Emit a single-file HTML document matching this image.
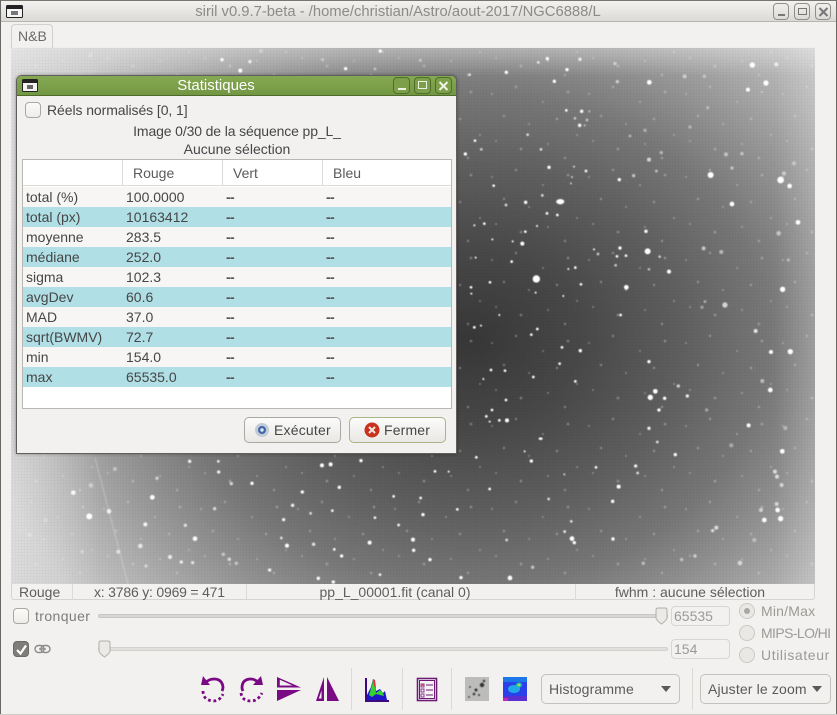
<!DOCTYPE html>
<html><head><meta charset="utf-8"><style>
html,body{margin:0;padding:0;background:#f2f1f0}
#r{position:relative;width:837px;height:715px;overflow:hidden;background:#f2f1f0;font-family:"Liberation Sans",sans-serif;font-size:14px;color:#464646}
.t{position:absolute;white-space:nowrap;line-height:18px}
.d{letter-spacing:-.6px;font-weight:bold;color:#555}
.a{position:absolute;box-sizing:border-box}
.wb{position:absolute;top:3px;width:16px;height:17px;box-sizing:border-box;border:1px solid #8f8f8a;border-radius:4px;background:linear-gradient(#f0efed,#dddbd7)}
.db{position:absolute;top:77px;width:17px;height:17px;box-sizing:border-box;border:1px solid #4f6e2a;border-radius:4px;background:#7d9f4a}
.row{position:absolute;left:23px;width:428px;height:20px}
.teal{background:#b0dfe5}
.chk{position:absolute;width:16px;height:16px;box-sizing:border-box;border:1px solid #a9a8a3;border-radius:4px;background:linear-gradient(#fbfbfa,#eeedeb)}
.entry{position:absolute;height:20px;box-sizing:border-box;border:1px solid #d8d6d2;border-radius:4px;background:#f2f1f0;color:#9a9a96;padding-left:2px;line-height:18px}
.rad{position:absolute;width:16px;height:16px;box-sizing:border-box;border:1px solid #c9c8c4;border-radius:50%;background:#e9e8e5}
.btn{position:absolute;box-sizing:border-box;border:1px solid #b4b2ac;border-radius:5px;background:linear-gradient(#fbfbfa,#e9e8e5)}
.sep{position:absolute;width:1px;background:#dcdad6}
</style></head><body><div id="r">

<!-- window frame -->
<div class="a" style="left:0;top:0;width:837px;height:22px;background:linear-gradient(#f3f2f0,#dcdad6);border-bottom:1px solid #b8b6b0;border-top:1px solid #77756f"></div>
<div class="a" style="left:0;top:0;width:1px;height:715px;background:#6a6864"></div>
<div class="a" style="right:0;top:0;width:1px;height:715px;background:#6a6864"></div>
<svg class="a" style="left:6px;top:5px" width="17" height="13" viewBox="0 0 17 13"><rect x=".5" y=".5" width="16" height="12" rx="1" fill="#f6f6f6" stroke="#222"/><rect x="1" y="1" width="15" height="3" fill="#222"/><rect x="5" y="6" width="7" height="4" fill="#777"/></svg>
<div class="t" style="left:398px;top:3px;color:#8b8b87;transform:translateX(-50%);font-size:14.8px">siril v0.9.7-beta - /home/christian/Astro/aout-2017/NGC6888/L</div>
<div class="wb" style="left:773px"><div class="a" style="left:4px;top:10px;width:7px;height:2px;background:#777"></div></div>
<div class="wb" style="left:794px"><div class="a" style="left:3px;top:4px;width:9px;height:7px;border:1px solid #777"></div></div>
<div class="wb" style="left:815px"><svg class="a" style="left:2px;top:3px" width="11" height="10"><path d="M1.5 1l8 8M9.500 1l-8 8" stroke="#777" stroke-width="2"/></svg></div>

<!-- tab -->
<div class="a" style="left:11px;top:24px;width:42px;height:25px;border:1px solid #d2d0cb;border-bottom:0;border-radius:4px 4px 0 0;background:#f2f1f0"></div>
<div class="t" style="left:18px;top:27px;color:#6a6a68;font-size:14px">N&amp;B</div>

<!-- image -->
<div class="a" style="left:11px;top:48px;width:804px;height:536px;background:linear-gradient(to bottom,rgba(255,255,255,.34),rgba(255,255,255,0) 28px),linear-gradient(to right,rgba(255,255,255,.4),rgba(255,255,255,0) 90px),linear-gradient(to left,rgba(255,255,255,.18),rgba(255,255,255,0) 40px),radial-gradient(500px 412px at 459px 292px,#393939 0,#4b4b4b 22%,#626262 42%,#7c7c7c 60%,#9a9a9a 74%,#b9b9b9 88%,#d0d0d0 100%)"></div>
<svg class="a" style="left:0;top:0;filter:blur(.65px)" width="837" height="715" viewBox="0 0 837 715">
<defs><pattern id="g" width="3" height="3" patternUnits="userSpaceOnUse"><path d="M0 .5H3M.5 0V3" stroke="#000" stroke-opacity=".07" fill="none"/></pattern>
<pattern id="f" width="97" height="83" patternUnits="userSpaceOnUse"><g fill="#fff" fill-opacity=".32"><circle cx="7" cy="11" r="1"/><circle cx="31" cy="4" r="1.200"/><circle cx="58" cy="19" r="1"/><circle cx="83" cy="9" r="1.300"/><circle cx="19" cy="33" r="1.200"/><circle cx="44" cy="41" r="1"/><circle cx="72" cy="36" r="1.200"/><circle cx="92" cy="52" r="1"/><circle cx="11" cy="58" r="1"/><circle cx="36" cy="66" r="1.300"/><circle cx="63" cy="61" r="1"/><circle cx="80" cy="75" r="1.200"/></g></pattern>
<clipPath id="ic"><rect x="11" y="48" width="804" height="536"/></clipPath></defs>
<g clip-path="url(#ic)">
<rect x="11" y="48" width="804" height="536" fill="url(#f)"/>
<rect x="11" y="48" width="804" height="536" fill="url(#g)"/>
<path d="M95 458L128 584" stroke="#fff" stroke-opacity=".2" stroke-width="1.500"/>
<g fill="#fff">
<g transform="translate(11,45) scale(.3333)">
<circle cx="1108" cy="18" r="5"/><circle cx="633" cy="44" r="5"/><circle cx="717" cy="50" r="5" fill-opacity=".8"/><circle cx="688" cy="77" r="6"/><circle cx="1004" cy="71" r="5"/><circle cx="238" cy="32" r="6" fill-opacity=".25"/><circle cx="750" cy="18" r="6" fill-opacity=".3"/><circle cx="935" cy="44" r="5" fill-opacity=".35"/><circle cx="1092" cy="72" r="4" fill-opacity=".5"/><circle cx="1228" cy="46" r="4" fill-opacity=".5"/>
</g>
<g transform="translate(460,50) scale(.3333)">
<circle cx="568" cy="97" r="7"/><circle cx="877" cy="45" r="8"/><circle cx="918" cy="99" r="8"/><circle cx="864" cy="119" r="6"/><circle cx="949" cy="43" r="6" fill-opacity=".7"/><circle cx="262" cy="26" r="5"/><circle cx="235" cy="37" r="4" fill-opacity=".8"/><circle cx="321" cy="59" r="5"/><circle cx="360" cy="28" r="5" fill-opacity=".8"/><circle cx="139" cy="67" r="5"/><circle cx="283" cy="94" r="5"/><circle cx="29" cy="74" r="4" fill-opacity=".8"/><circle cx="472" cy="95" r="5" fill-opacity=".6"/><circle cx="465" cy="41" r="5" fill-opacity=".5"/><circle cx="674" cy="79" r="6" fill-opacity=".5"/><circle cx="733" cy="79" r="5" fill-opacity=".4"/><circle cx="365" cy="184" r="5"/><circle cx="319" cy="181" r="4"/><circle cx="359" cy="226" r="5"/><circle cx="345" cy="205" r="4" fill-opacity=".6"/><circle cx="381" cy="210" r="4" fill-opacity=".6"/><circle cx="388" cy="184" r="3" fill-opacity=".6"/><circle cx="374" cy="226" r="3" fill-opacity=".6"/><circle cx="45" cy="272" r="4"/><circle cx="16" cy="312" r="5"/><circle cx="64" cy="298" r="4" fill-opacity=".7"/><circle cx="203" cy="254" r="4" fill-opacity=".8"/><circle cx="243" cy="298" r="4" fill-opacity=".8"/><circle cx="267" cy="352" r="5"/><circle cx="378" cy="363" r="4"/><circle cx="342" cy="350" r="3" fill-opacity=".8"/><circle cx="336" cy="381" r="3" fill-opacity=".7"/><circle cx="333" cy="400" r="3" fill-opacity=".7"/><circle cx="478" cy="389" r="5"/><circle cx="567" cy="329" r="6" fill-opacity=".7"/><circle cx="604" cy="308" r="5" fill-opacity=".5"/><circle cx="589" cy="363" r="4" fill-opacity=".6"/><circle cx="521" cy="377" r="5" fill-opacity=".6"/><circle cx="752" cy="375" r="9"/><circle cx="962" cy="390" r="10"/><circle cx="989" cy="408" r="7"/><circle cx="816" cy="462" r="7"/><circle cx="1014" cy="517" r="7"/><circle cx="798" cy="313" r="6" fill-opacity=".5"/><circle cx="846" cy="311" r="5" fill-opacity=".5"/><circle cx="816" cy="354" r="5" fill-opacity=".5"/><circle cx="972" cy="370" r="6" fill-opacity=".5"/><circle cx="1002" cy="340" r="6" fill-opacity=".4"/><circle cx="956" cy="550" r="7" fill-opacity=".5"/><circle cx="690" cy="231" r="5" fill-opacity=".4"/><circle cx="555" cy="241" r="5" fill-opacity=".4"/><circle cx="510" cy="258" r="4" fill-opacity=".5"/><circle cx="743" cy="173" r="5" fill-opacity=".35"/>
<ellipse cx="301" cy="455" rx="12" ry="8"/><circle cx="197" cy="457" r="5"/><circle cx="247" cy="436" r="4" fill-opacity=".8"/><circle cx="261" cy="490" r="4"/><circle cx="292" cy="495" r="4"/><circle cx="138" cy="465" r="4" fill-opacity=".8"/><circle cx="73" cy="521" r="4"/><circle cx="43" cy="526" r="3"/><circle cx="101" cy="407" r="4"/><circle cx="187" cy="581" r="6"/><circle cx="196" cy="545" r="4"/><circle cx="231" cy="528" r="3"/><circle cx="97" cy="568" r="3"/><circle cx="158" cy="574" r="3"/><circle cx="558" cy="544" r="5"/><circle cx="563" cy="604" r="9"/><circle cx="480" cy="594" r="5"/><circle cx="471" cy="619" r="4"/><circle cx="498" cy="617" r="4"/><circle cx="402" cy="598" r="3"/><circle cx="414" cy="612" r="4" fill-opacity=".7"/><circle cx="627" cy="665" r="6"/><circle cx="599" cy="620" r="4" fill-opacity=".7"/><circle cx="567" cy="658" r="4" fill-opacity=".6"/><circle cx="731" cy="595" r="6" fill-opacity=".6"/><circle cx="784" cy="606" r="6" fill-opacity=".5"/><circle cx="229" cy="687" r="11"/><circle cx="155" cy="635" r="4"/><circle cx="346" cy="653" r="4"/><circle cx="325" cy="657" r="3"/><circle cx="363" cy="703" r="4"/><circle cx="499" cy="712" r="7"/><circle cx="467" cy="646" r="4" fill-opacity=".7"/><circle cx="90" cy="697" r="4"/><circle cx="33" cy="712" r="4"/><circle cx="34" cy="731" r="3"/><circle cx="47" cy="623" r="3"/><circle cx="968" cy="718" r="8"/><circle cx="795" cy="765" r="8" fill-opacity=".7"/><circle cx="735" cy="755" r="4" fill-opacity=".5"/><circle cx="726" cy="772" r="5" fill-opacity=".4"/><circle cx="985" cy="630" r="5" fill-opacity=".4"/><circle cx="482" cy="795" r="4"/><circle cx="118" cy="795" r="3"/><circle cx="227" cy="728" r="3"/><circle cx="310" cy="738" r="3"/>
</g>
<g transform="translate(11,440) scale(.3333)">
<circle cx="187" cy="158" r="7" fill-opacity=".9"/><circle cx="235" cy="229" r="9"/><circle cx="294" cy="214" r="7" fill-opacity=".8"/><circle cx="240" cy="136" r="7" fill-opacity=".4"/><circle cx="312" cy="87" r="6" fill-opacity=".4"/><circle cx="424" cy="172" r="7"/><circle cx="403" cy="253" r="6" fill-opacity=".9"/><circle cx="388" cy="318" r="7" fill-opacity=".7"/><circle cx="536" cy="64" r="5" fill-opacity=".9"/><circle cx="622" cy="64" r="4" fill-opacity=".9"/><circle cx="623" cy="96" r="5" fill-opacity=".9"/><circle cx="438" cy="115" r="5" fill-opacity=".6"/><circle cx="611" cy="206" r="5" fill-opacity=".7"/><circle cx="523" cy="256" r="5" fill-opacity=".7"/><circle cx="552" cy="296" r="7"/><circle cx="477" cy="351" r="6" fill-opacity=".8"/><circle cx="511" cy="366" r="5" fill-opacity=".8"/><circle cx="545" cy="368" r="5" fill-opacity=".7"/><circle cx="322" cy="335" r="6" fill-opacity=".6"/><circle cx="405" cy="378" r="5" fill-opacity=".5"/><circle cx="933" cy="76" r="6"/><circle cx="959" cy="73" r="6"/><circle cx="1050" cy="62" r="5"/><circle cx="985" cy="142" r="5"/><circle cx="874" cy="156" r="5"/><circle cx="723" cy="130" r="5"/><circle cx="661" cy="131" r="5" fill-opacity=".7"/><circle cx="845" cy="196" r="5" fill-opacity=".9"/><circle cx="818" cy="239" r="5" fill-opacity=".9"/><circle cx="964" cy="212" r="4"/><circle cx="899" cy="220" r="4" fill-opacity=".8"/><circle cx="1092" cy="233" r="4"/><circle cx="1163" cy="255" r="4"/><circle cx="1148" cy="169" r="4"/><circle cx="828" cy="317" r="6"/><circle cx="1076" cy="308" r="6"/><circle cx="908" cy="313" r="5" fill-opacity=".8"/><circle cx="992" cy="348" r="5"/><circle cx="970" cy="328" r="4"/><circle cx="811" cy="294" r="4" fill-opacity=".8"/><circle cx="776" cy="390" r="5" fill-opacity=".9"/><circle cx="922" cy="415" r="5"/><circle cx="967" cy="426" r="5"/><circle cx="1107" cy="404" r="4"/><circle cx="655" cy="358" r="5" fill-opacity=".7"/><circle cx="637" cy="343" r="5" fill-opacity=".5"/><circle cx="676" cy="370" r="5" fill-opacity=".5"/><circle cx="214" cy="335" r="5" fill-opacity=".4"/><circle cx="104" cy="240" r="6" fill-opacity=".25"/><circle cx="56" cy="285" r="6" fill-opacity=".25"/>
</g>
<g transform="translate(410,320) scale(.3333)">
<circle cx="193" cy="22" r="4"/><circle cx="213" cy="17" r="3"/><circle cx="364" cy="44" r="4"/><circle cx="382" cy="27" r="4"/><circle cx="511" cy="92" r="5"/><circle cx="456" cy="82" r="4"/><circle cx="449" cy="131" r="4"/><circle cx="285" cy="152" r="4"/><circle cx="243" cy="150" r="4"/><circle cx="220" cy="177" r="3"/><circle cx="370" cy="171" r="4"/><circle cx="496" cy="184" r="4"/><circle cx="288" cy="240" r="4"/><circle cx="291" cy="301" r="6"/><circle cx="268" cy="301" r="4"/><circle cx="246" cy="270" r="4"/><circle cx="229" cy="289" r="4"/><circle cx="239" cy="305" r="3"/><ellipse cx="392" cy="356" rx="6" ry="4"/><circle cx="364" cy="423" r="5"/><circle cx="344" cy="394" r="3"/><circle cx="199" cy="412" r="4"/><circle cx="75" cy="454" r="4"/><circle cx="116" cy="455" r="3"/><circle cx="239" cy="507" r="4"/><circle cx="32" cy="534" r="4"/><circle cx="142" cy="568" r="4"/><circle cx="39" cy="584" r="5"/><circle cx="9" cy="659" r="6"/><circle cx="11" cy="691" r="5"/><circle cx="60" cy="719" r="5"/><circle cx="153" cy="773" r="5"/><circle cx="300" cy="774" r="7"/><circle cx="290" cy="660" r="4" fill-opacity=".8"/><circle cx="486" cy="656" r="7"/><circle cx="493" cy="668" r="5"/><circle cx="464" cy="635" r="4" fill-opacity=".9"/><circle cx="609" cy="657" r="5"/><circle cx="484" cy="604" r="4" fill-opacity=".8"/><circle cx="416" cy="537" r="4" fill-opacity=".8"/><circle cx="608" cy="544" r="5"/><circle cx="626" cy="500" r="6"/><circle cx="558" cy="442" r="4"/><circle cx="677" cy="438" r="5" fill-opacity=".9"/><circle cx="683" cy="459" r="4" fill-opacity=".8"/><circle cx="463" cy="463" r="3" fill-opacity=".8"/><circle cx="721" cy="232" r="8"/><circle cx="736" cy="214" r="7"/><circle cx="764" cy="235" r="5"/><circle cx="747" cy="270" r="5"/><circle cx="717" cy="125" r="5"/><circle cx="717" cy="325" r="5" fill-opacity=".9"/><circle cx="742" cy="366" r="4" fill-opacity=".8"/><circle cx="796" cy="404" r="5"/><circle cx="832" cy="228" r="5" fill-opacity=".9"/><circle cx="805" cy="198" r="5" fill-opacity=".7"/><circle cx="1081" cy="210" r="7"/><circle cx="1141" cy="95" r="8"/><circle cx="1083" cy="96" r="6"/><circle cx="1037" cy="33" r="6" fill-opacity=".8"/><circle cx="1016" cy="316" r="6"/><circle cx="1117" cy="394" r="7"/><circle cx="1095" cy="455" r="6" fill-opacity=".7"/><circle cx="1101" cy="470" r="6" fill-opacity=".7"/><circle cx="1115" cy="495" r="6" fill-opacity=".6"/><circle cx="1103" cy="570" r="7"/><circle cx="1112" cy="596" r="8"/><circle cx="1063" cy="600" r="7"/><circle cx="1100" cy="552" r="6" fill-opacity=".6"/><circle cx="1053" cy="570" r="6" fill-opacity=".6"/><circle cx="919" cy="623" r="6" fill-opacity=".7"/><circle cx="908" cy="632" r="5" fill-opacity=".7"/><circle cx="990" cy="729" r="7" fill-opacity=".6"/><circle cx="855" cy="708" r="5" fill-opacity=".6"/><circle cx="815" cy="719" r="5" fill-opacity=".5"/><circle cx="700" cy="730" r="5" fill-opacity=".5"/><circle cx="368" cy="742" r="5" fill-opacity=".6"/><circle cx="1057" cy="183" r="6" fill-opacity=".5"/><circle cx="1126" cy="324" r="6" fill-opacity=".4"/><circle cx="964" cy="376" r="6" fill-opacity=".4"/><circle cx="1033" cy="660" r="6" fill-opacity=".4"/><circle cx="890" cy="270" r="5" fill-opacity=".4"/>
</g>
</g></g></svg>

<!-- status bar -->
<div class="a" style="left:11px;top:584px;width:804px;height:16px;background:#f2f1f0;border:1px solid #d6d4d0;border-top:0;border-radius:0 0 3px 3px"></div>
<div class="sep" style="left:72px;top:584px;height:16px"></div>
<div class="sep" style="left:246px;top:584px;height:16px"></div>
<div class="sep" style="left:575px;top:584px;height:16px"></div>
<div class="t" style="left:19px;top:583px;color:#5e5e5c">Rouge</div>
<div class="t" style="left:94px;top:583px;color:#5e5e5c;letter-spacing:-.2px">x: 3786 y: 0969 = 471</div>
<div class="t" style="left:395px;top:583px;color:#5e5e5c;transform:translateX(-50%)">pp_L_00001.fit (canal 0)</div>
<div class="t" style="left:690px;top:583px;color:#5e5e5c;transform:translateX(-50%)">fwhm : aucune sélection</div>

<!-- sliders row -->
<div class="chk" style="left:13px;top:608px"></div>
<div class="t" style="left:35px;top:607px;color:#7c7c7a;letter-spacing:.4px">tronquer</div>
<div class="a" style="left:98px;top:614px;width:570px;height:4px;background:#d8d6d2;border:1px solid #c9c7c3;border-radius:2px"></div>
<svg class="a" style="left:655px;top:607px" width="13" height="18"><path d="M1 3q0-2 2-2h7q2 0 2 2v8q0 2-5.500 6q-5.500-4-5.500-6z" fill="#eceae7" stroke="#b0aeaa"/></svg>
<div class="entry" style="left:671px;top:606px;width:59px">65535</div>
<div class="rad" style="left:739px;top:603px"><div class="a" style="left:4px;top:4px;width:6px;height:6px;border-radius:50%;background:#a9a8a4"></div></div>
<div class="t" style="left:761px;top:602px;color:#9a9a96;letter-spacing:.2px">Min/Max</div>
<div class="rad" style="left:739px;top:625px"></div>
<div class="t" style="left:761px;top:624px;color:#9a9a96;letter-spacing:-.6px">MIPS-LO/HI</div>
<div class="rad" style="left:739px;top:647px"></div>
<div class="t" style="left:761px;top:646px;color:#9a9a96;letter-spacing:.6px">Utilisateur</div>

<div class="chk" style="left:13px;top:641px;background:#7f7e7a;border-color:#6b6a66"><svg class="a" style="left:1px;top:1px" width="13" height="13"><path d="M2 7l3.500 3.500L11 2.500" fill="none" stroke="#fff" stroke-width="2.200"/></svg></div>
<svg class="a" style="left:34px;top:644px" width="17" height="10"><rect x="1" y="1.500" width="9" height="7" rx="3.500" fill="none" stroke="#8a8a86" stroke-width="1.400"/><rect x="7" y="1.500" width="9" height="7" rx="3.500" fill="none" stroke="#8a8a86" stroke-width="1.400"/><path d="M5 5h7" stroke="#8a8a86" stroke-width="1.400"/></svg>
<div class="a" style="left:98px;top:647px;width:570px;height:4px;background:#e2e0dc;border:1px solid #d3d1cd;border-radius:2px"></div>
<svg class="a" style="left:98px;top:640px" width="13" height="18"><path d="M1 3q0-2 2-2h7q2 0 2 2v8q0 2-5.500 6q-5.500-4-5.500-6z" fill="#eceae7" stroke="#b0aeaa"/></svg>
<div class="entry" style="left:671px;top:639px;width:59px">154</div>

<!-- toolbar -->
<svg class="a" style="left:0;top:665px" width="540" height="50" viewBox="0 0 540 50">
<g fill="#7a0a84" stroke="none">
<path d="M205 18q4-4 9-4 8 0 9 8 0 2-1 4" fill="none" stroke="#7a0a84" stroke-width="2.800"/><path d="M201 20l2-9 7 9z"/>
<g fill="none" stroke="#7a0a84" stroke-width="2.800" stroke-dasharray="2.800 2.600"><path d="M203 26q0 9 10 10 7 0 10-7"/></g>
<path d="M259 18q-4-4-8-4-9 0-9 9 0 1 1 3" fill="none" stroke="#7a0a84" stroke-width="2.800"/><path d="M263 20l-2-9-8 9z"/>
<g fill="none" stroke="#7a0a84" stroke-width="2.800" stroke-dasharray="2.800 2.600"><path d="M241 28q1 8 10 8 7 0 11-8"/></g>
<path d="M277 12l24 10.500h-24zM279.800 14.800v5.700h12.900z" fill-rule="evenodd"/><path d="M277 25h24l-24 11z"/>
<path d="M316 36l8-24v24zM318.800 33.500h2.700v-8z" fill-rule="evenodd"/><path d="M327 12l12 24h-12z"/>
<rect x="365" y="35" width="24" height="2" fill="#3c0a80"/><rect x="365" y="13" width="2" height="24" fill="#3c0a80"/>
<path d="M367 35v-5l4-8 2-8 2 2 1 10 4-2 3 4 2-2 2 9z" fill="#1d17c8"/><path d="M369 30l3-10 1-6 2 6 1 8 4-3 3 3 1 3-8-2-4 3z" fill="#35d32f"/><path d="M373 14l2 1 1 8-2-2z" fill="#e0303a"/>
<rect x="417.500" y="13.500" width="19" height="22" fill="#fff" stroke="#6c1a74" stroke-width="1.600"/><rect x="419.500" y="15.500" width="15" height="18" fill="#f4f2f4" stroke="#6c1a74"/>
<path d="M421 19h3v3h-3zM421 24h3v3h-3zM421 29h3v3h-3z" fill="none" stroke="#8a3a90"/><path d="M421 19h3v2h-3z" fill="#e04a50"/><path d="M426 20h7M426 25h7M426 30h7" stroke="#6c1a74" stroke-width="1.100"/>
</g>
<rect x="465" y="12" width="24" height="24" fill="#bcbcba"/>
<g fill="#333" style="filter:blur(.5px)"><circle cx="482" cy="20" r="2.200"/><circle cx="476" cy="25" r="1.500"/><circle cx="474" cy="29" r="1.300"/><circle cx="484" cy="16" r="1.200"/><circle cx="470" cy="22" r=".9"/><circle cx="479" cy="30" r="1"/><circle cx="469" cy="32" r=".9"/></g>
<rect x="503" y="12" width="24" height="24" fill="#2a40e8"/><rect x="503" y="31" width="24" height="5" fill="#5a30d0"/><rect x="503" y="12" width="24" height="5" fill="#1c78e8"/>
<ellipse cx="514" cy="24" rx="6" ry="4" fill="#22a8e6"/><ellipse cx="519" cy="20" rx="3" ry="2.500" fill="#28c8a0"/><circle cx="519" cy="20" r="1" fill="#e8e040"/><rect x="503" y="33" width="5" height="3" fill="#c02ab0"/>
</svg>
<div class="sep" style="left:351px;top:668px;height:42px"></div>
<div class="sep" style="left:402px;top:668px;height:42px"></div>
<div class="sep" style="left:451px;top:668px;height:42px"></div>
<div class="sep" style="left:692px;top:668px;height:42px"></div>
<div class="btn" style="left:541px;top:674px;width:139px;height:30px;background:#f2f1f0;border-color:#c4c2bd"></div>
<div class="t" style="left:549px;top:680px;color:#5a5a58;letter-spacing:.15px">Histogramme</div>
<div class="a" style="left:661px;top:686px;border-left:5px solid transparent;border-right:5px solid transparent;border-top:6px solid #5a5a58"></div>
<div class="btn" style="left:700px;top:674px;width:131px;height:30px;background:#f2f1f0;border-color:#c4c2bd"></div>
<div class="t" style="left:708px;top:680px;color:#5a5a58;letter-spacing:.15px">Ajuster le zoom</div>
<div class="a" style="left:812px;top:686px;border-left:5px solid transparent;border-right:5px solid transparent;border-top:6px solid #5a5a58"></div>
<div class="a" style="left:0;top:714px;width:837px;height:1px;background:#cfcdc9"></div>

<!-- dialog -->
<div class="a" style="left:16px;top:75px;width:441px;height:379px;background:#f2f1f0;border:1px solid #5f5f5c;border-radius:6px 6px 0 0;box-shadow:0 0 3px rgba(0,0,0,.35)"></div>
<div class="a" style="left:17px;top:76px;width:439px;height:20px;background:linear-gradient(#86a853,#729742);border-radius:5px 5px 0 0;border-bottom:1px solid #4f6a2a"></div>
<svg class="a" style="left:22px;top:79px" width="16" height="13" viewBox="0 0 16 13"><rect x=".5" y=".5" width="15" height="12" rx="1" fill="#f4f4f4" stroke="#222"/><rect x="1" y="1" width="14" height="3" fill="#222"/><rect x="5" y="6" width="6" height="4" fill="#666"/></svg>
<div class="t" style="left:216px;top:77px;color:#fff;transform:translateX(-50%);font-size:15px">Statistiques</div>
<div class="db" style="left:393px"><div class="a" style="left:4px;top:10px;width:8px;height:2px;background:#eef2e4"></div></div>
<div class="db" style="left:414px"><div class="a" style="left:3px;top:3px;width:9px;height:8px;border:1px solid #eef2e4"></div></div>
<div class="db" style="left:435px"><svg class="a" style="left:2px;top:3px" width="11" height="10"><path d="M1.500 1l8 8M9.500 1l-8 8" stroke="#eef2e4" stroke-width="2"/></svg></div>

<div class="chk" style="left:25px;top:102px"></div>
<div class="t" style="left:47px;top:101px;letter-spacing:-.08px">Réels normalisés [0, 1]</div>
<div class="t" style="left:237px;top:122px;transform:translateX(-50%);letter-spacing:-.13px">Image 0/30 de la séquence pp_L_</div>
<div class="t" style="left:237px;top:140px;transform:translateX(-50%)">Aucune sélection</div>

<div class="a" style="left:22px;top:159px;width:430px;height:250px;background:#fff;border:1px solid #b9b7b2"></div>
<div class="a" style="left:23px;top:160px;width:428px;height:26px;background:#fff;border-bottom:1px solid #dcdad6"></div>
<div class="sep" style="left:122px;top:160px;height:26px"></div>
<div class="sep" style="left:222px;top:160px;height:26px"></div>
<div class="sep" style="left:322px;top:160px;height:26px"></div>
<div class="t" style="left:133px;top:164px;color:#5a5a58">Rouge</div>
<div class="t" style="left:233px;top:164px;color:#5a5a58">Vert</div>
<div class="t" style="left:333px;top:164px;color:#5a5a58">Bleu</div>

<div class="row" style="top:187px;background:#f7f6f5"></div>
<div class="row teal" style="top:207px"></div>
<div class="row" style="top:227px;background:#f7f6f5"></div>
<div class="row teal" style="top:247px"></div>
<div class="row" style="top:267px;background:#f7f6f5"></div>
<div class="row teal" style="top:287px"></div>
<div class="row" style="top:307px;background:#f7f6f5"></div>
<div class="row teal" style="top:327px"></div>
<div class="row" style="top:347px;background:#f7f6f5"></div>
<div class="row teal" style="top:367px"></div>

<div class="t" style="left:26px;top:188px">total (%)</div><div class="t" style="left:126px;top:188px">100.0000</div><div class="t d" style="left:226px;top:188px">--</div><div class="t d" style="left:326px;top:188px">--</div>
<div class="t" style="left:26px;top:208px">total (px)</div><div class="t" style="left:126px;top:208px">10163412</div><div class="t d" style="left:226px;top:208px">--</div><div class="t d" style="left:326px;top:208px">--</div>
<div class="t" style="left:26px;top:228px">moyenne</div><div class="t" style="left:126px;top:228px">283.5</div><div class="t d" style="left:226px;top:228px">--</div><div class="t d" style="left:326px;top:228px">--</div>
<div class="t" style="left:26px;top:248px">médiane</div><div class="t" style="left:126px;top:248px">252.0</div><div class="t d" style="left:226px;top:248px">--</div><div class="t d" style="left:326px;top:248px">--</div>
<div class="t" style="left:26px;top:268px">sigma</div><div class="t" style="left:126px;top:268px">102.3</div><div class="t d" style="left:226px;top:268px">--</div><div class="t d" style="left:326px;top:268px">--</div>
<div class="t" style="left:26px;top:288px">avgDev</div><div class="t" style="left:126px;top:288px">60.6</div><div class="t d" style="left:226px;top:288px">--</div><div class="t d" style="left:326px;top:288px">--</div>
<div class="t" style="left:26px;top:308px">MAD</div><div class="t" style="left:126px;top:308px">37.0</div><div class="t d" style="left:226px;top:308px">--</div><div class="t d" style="left:326px;top:308px">--</div>
<div class="t" style="left:26px;top:328px">sqrt(BWMV)</div><div class="t" style="left:126px;top:328px">72.7</div><div class="t d" style="left:226px;top:328px">--</div><div class="t d" style="left:326px;top:328px">--</div>
<div class="t" style="left:26px;top:348px">min</div><div class="t" style="left:126px;top:348px">154.0</div><div class="t d" style="left:226px;top:348px">--</div><div class="t d" style="left:326px;top:348px">--</div>
<div class="t" style="left:26px;top:368px">max</div><div class="t" style="left:126px;top:368px">65535.0</div><div class="t d" style="left:226px;top:368px">--</div><div class="t d" style="left:326px;top:368px">--</div>

<div class="btn" style="left:244px;top:417px;width:97px;height:26px;border-color:#a9a8a3"></div>
<svg class="a" style="left:254px;top:422px" width="16" height="16"><circle cx="8" cy="8" r="7" fill="#c4cbd8"/><circle cx="8" cy="8" r="4" fill="#3f68a8"/><circle cx="8" cy="8" r="1.700" fill="#e6ecf4"/></svg>
<div class="t" style="left:274px;top:421px;letter-spacing:.2px">Exécuter</div>
<div class="btn" style="left:349px;top:417px;width:97px;height:26px;border-color:#a9b585"></div>
<svg class="a" style="left:364px;top:422px" width="16" height="16"><circle cx="8" cy="8" r="7.500" fill="#c8321e"/><path d="M5 5l6 6M11 5l-6 6" stroke="#f5e8de" stroke-width="2"/></svg>
<div class="t" style="left:384px;top:421px;letter-spacing:.15px">Fermer</div>
</div></body></html>
